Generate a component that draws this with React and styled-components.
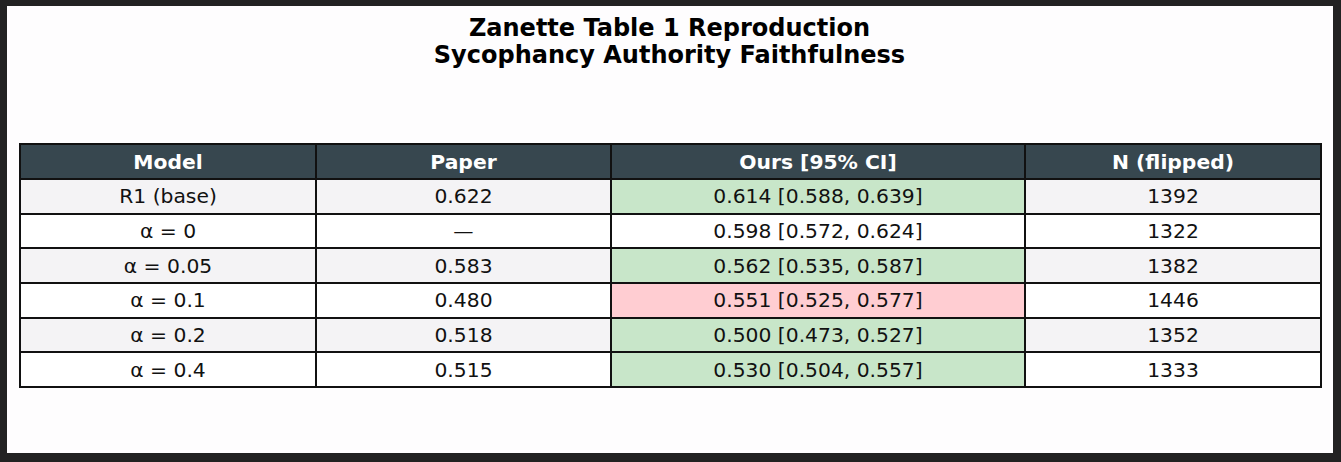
import React from "react";
import styled, { createGlobalStyle } from "styled-components";

const rows = [
  { model: "R1 (base)", paper: "0.622", ours: "0.614 [0.588, 0.639]", n: "1392", mark: "good" },
  { model: "α = 0", paper: "—", ours: "0.598 [0.572, 0.624]", n: "1322", mark: "none" },
  { model: "α = 0.05", paper: "0.583", ours: "0.562 [0.535, 0.587]", n: "1382", mark: "good" },
  { model: "α = 0.1", paper: "0.480", ours: "0.551 [0.525, 0.577]", n: "1446", mark: "bad" },
  { model: "α = 0.2", paper: "0.518", ours: "0.500 [0.473, 0.527]", n: "1352", mark: "good" },
  { model: "α = 0.4", paper: "0.515", ours: "0.530 [0.504, 0.557]", n: "1333", mark: "good" },
];

const markColors = {
  good: "#c8e6c9",
  bad: "#ffcdd2",
};

function App() {
  return (
    <>
      <GlobalStyle />
      <Figure>
        <Title>
          Zanette Table 1 Reproduction
          <br />
          Sycophancy Authority Faithfulness
        </Title>
        <Table>
          <colgroup>
            <col style={{ width: 296 }} />
            <col style={{ width: 295 }} />
            <col style={{ width: 414 }} />
            <col style={{ width: 296 }} />
          </colgroup>
          <thead>
            <tr>
              <HeadCell>Model</HeadCell>
              <HeadCell>Paper</HeadCell>
              <HeadCell>Ours [95% CI]</HeadCell>
              <HeadCell>N (flipped)</HeadCell>
            </tr>
          </thead>
          <tbody>
            {rows.map((r, i) => (
              <Row key={r.model} $striped={i % 2 === 0}>
                <Cell>{r.model}</Cell>
                <Cell>{r.paper}</Cell>
                <Cell $fill={markColors[r.mark]}>{r.ours}</Cell>
                <Cell>{r.n}</Cell>
              </Row>
            ))}
          </tbody>
        </Table>
      </Figure>
    </>
  );
}

export default App;

const GlobalStyle = createGlobalStyle`
  html, body {
    margin: 0;
    padding: 0;
    background: #222222;
  }
  body {
    font-family: "DejaVu Sans", "Liberation Sans", sans-serif;
    color: #000;
  }
`;

const Figure = styled.div`
  box-sizing: border-box;
  width: 1326px;
  height: 447px;
  margin: 6px 8px 9px 7px;
  background: #fefdfe;
  padding: 9px 13px 0 12px;
  display: flex;
  flex-direction: column;
  align-items: stretch;
`;

const Title = styled.div`
  font-size: 24px;
  line-height: 27px;
  font-weight: 700;
  text-align: center;
  color: #000;
  margin-bottom: 74px;
`;

const Table = styled.table`
  width: 1301px;
  table-layout: fixed;
  border-collapse: collapse;
  font-size: 20.3px;
`;

const HeadCell = styled.th`
  height: 33px;
  padding: 0;
  background: #37474f;
  color: #ffffff;
  font-weight: 700;
  text-align: center;
  border: 2px solid #111;
`;

const Row = styled.tr`
  background: ${(p) => (p.$striped ? "#f4f3f5" : "#ffffff")};
`;

const Cell = styled.td`
  height: 32.7px;
  padding: 0;
  text-align: center;
  border: 2px solid #111;
  color: #111;
  background: ${(p) => p.$fill || "transparent"};
`;
